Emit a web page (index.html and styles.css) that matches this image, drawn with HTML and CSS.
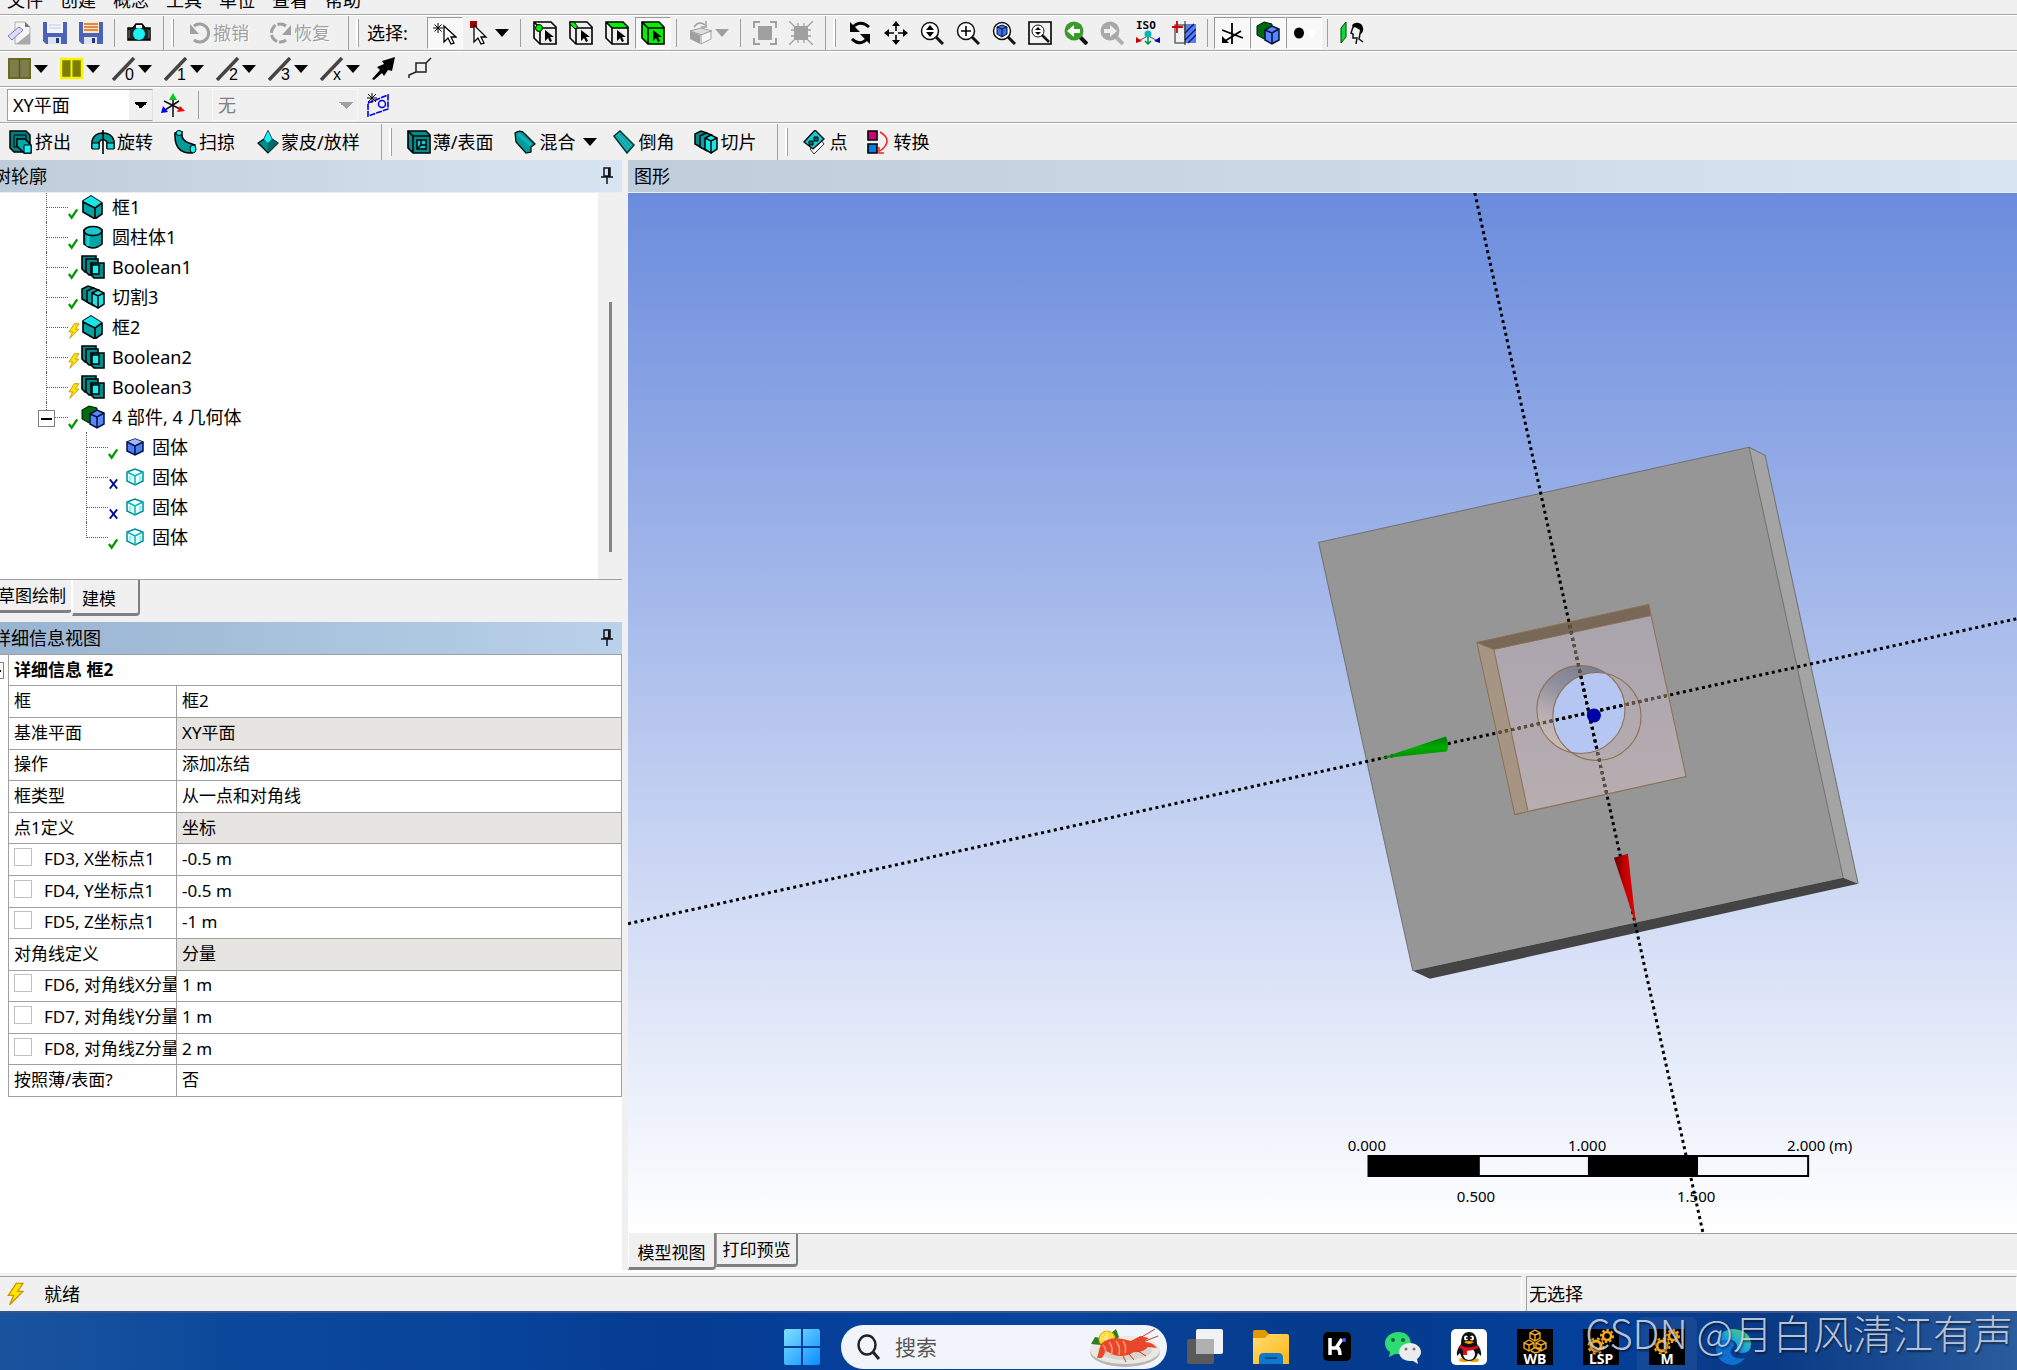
FILE: index.html
```html
<!DOCTYPE html>
<html lang="zh-CN">
<head>
    <meta charset="UTF-8">
    <meta name="viewport" content="width=device-width, initial-scale=1.0">
    <title>DesignModeler</title>
    <link rel="stylesheet" href="styles.css">
</head>
<body>
    <!-- Icon sprite -->
    <svg class="sprite" aria-hidden="true">
        <defs>
            <linearGradient id="gBlue" x1="0" y1="0" x2="1" y2="1"><stop offset="0" stop-color="#7fe0ff"/><stop offset="1" stop-color="#0a8dff"/></linearGradient>
            <linearGradient id="gFolder" x1="0" y1="0" x2="1" y2="1"><stop offset="0" stop-color="#ffdc70"/><stop offset="1" stop-color="#f9b818"/></linearGradient>
            <linearGradient id="gEdge" x1="0" y1="1" x2="1" y2="0"><stop offset="0" stop-color="#0a62c4"/><stop offset="0.5" stop-color="#1aa5dd"/><stop offset="1" stop-color="#5edb5a"/></linearGradient>
        </defs>
        <symbol id="i-new" viewBox="0 0 24 24"><path d="M8 1h10l5 5v17H8z" fill="#f4f4f4" stroke="#b0b0b0"/><path d="M18 1l5 5h-5z" fill="#777"/><path d="M9 23h14V12z" fill="#a9a9a9"/><path d="M1 15L12 6l4 3L5 19z" fill="#dcdcff" stroke="#7c7cc0"/></symbol>
        <symbol id="i-save" viewBox="0 0 24 24"><path d="M0 1h24v22H3l-3-3z" fill="#4a62b8"/><path d="M4 1h16v11H4z" fill="#f1f4fb"/><path d="M6 4h12M6 7h12" stroke="#c4cbe0"/><path d="M5 16h13v7H5z" fill="#dce2ef"/><path d="M13 17h3v5h-3z" fill="#24377e"/></symbol>
        <symbol id="i-saveas" viewBox="0 0 24 24"><path d="M0 1h24v22H3l-3-3z" fill="#4a62b8"/><path d="M4 1h16v11H4z" fill="#fbe9b8"/><path d="M5 3h14M5 6h14M5 9h14" stroke="#d8672f" stroke-width="1.5"/><path d="M5 16h13v7H5z" fill="#dce2ef"/><path d="M13 17h3v5h-3z" fill="#24377e"/></symbol>
        <symbol id="i-camera" viewBox="0 0 24 24"><path d="M1 7h5l3-4h6l3 4h5v12H1z" fill="#1c2626" stroke="#000" stroke-width="1.5"/><path d="M9 4h6v3H9z" fill="#efefef"/><path d="M2 9v8M22 9v8" stroke="#777"/><circle cx="12" cy="13" r="6" fill="#19f1f6"/></symbol>
        <symbol id="i-undo" viewBox="0 0 24 24"><path d="M6 5a9 9 0 1 1 0 14" fill="none" stroke="#a0a0a0" stroke-width="3"/><path d="M2 3v10h9z" fill="#a0a0a0"/></symbol>
        <symbol id="i-redo" viewBox="0 0 24 24"><path d="M17 5a9 9 0 1 0 0 14" fill="none" stroke="#a0a0a0" stroke-width="3" stroke-dasharray="9 2"/><path d="M22 4v10h-9z" fill="#a0a0a0"/></symbol>
        <symbol id="i-pick" viewBox="0 0 24 24"><path d="M5 2v10M0 7h10M1.500 3.500l7 7M8.500 3.500l-7 7" stroke="#000"/><path d="M11 5v16l4-4 3 6 3-1-3-6h5z" fill="#fff" stroke="#000" stroke-width="1.300"/></symbol>
        <symbol id="i-pickbox" viewBox="0 0 24 24"><path d="M1 0h7v7H1z" fill="#a00000"/><path d="M5 4v17l4-4 3 6 3-1-3-6h5z" fill="#fff" stroke="#000" stroke-width="1.300"/></symbol>
        <symbol id="i-cubeframe" viewBox="0 0 24 24"><path d="M1 1h17l5 5v17H7L1 17zM1 1l6 6h16M7 7v16" fill="none" stroke="#000" stroke-width="1.600"/><path d="M12 9v11l3-3 2 4 2-1-2-4h4z"/></symbol>
        <symbol id="i-selpoint" viewBox="0 0 24 24"><use href="#i-cubeframe"/><circle cx="6" cy="7" r="3.500" fill="#00f000" stroke="#000"/></symbol>
        <symbol id="i-seledge" viewBox="0 0 24 24"><use href="#i-cubeframe"/><path d="M1 1h4l4 5-3 2-5-5z" fill="#00f000" stroke="#000"/></symbol>
        <symbol id="i-selface" viewBox="0 0 24 24"><path d="M1 1h17l5 6H7z" fill="#00f000"/><use href="#i-cubeframe"/></symbol>
        <symbol id="i-selbody" viewBox="0 0 24 24"><path d="M1 1h17l5 5v17H7L1 17z" fill="#00f000"/><use href="#i-cubeframe"/></symbol>
        <symbol id="i-extend" viewBox="0 0 24 24"><path d="M1 10l11-3 11 3-10 4z" fill="#ddd" stroke="#a0a0a0"/><path d="M1 10l10 4v9L1 18z" fill="#a0a0a0"/><path d="M12 14l10-4v8l-10 5z" fill="#f5f5f5" stroke="#a0a0a0"/><path d="M5 6q5-7 11-2M17 0v6h-5" fill="none" stroke="#a0a0a0" stroke-width="1.500"/></symbol>
        <symbol id="i-grow" viewBox="0 0 24 24"><path d="M5 5h14v14H5z" fill="#a0a0a0"/><path d="M1 7V1h6M17 1h6v6M23 17v6h-6M7 23H1v-6" fill="none" stroke="#a0a0a0" stroke-width="2"/></symbol>
        <symbol id="i-shrink" viewBox="0 0 24 24"><path d="M5 5h14v14H5z" fill="#a0a0a0"/><path d="M0 0l24 24M24 0L0 24M9 2v20M15 2v20M2 9h20M2 15h20" stroke="#a0a0a0" stroke-width="1.300"/></symbol>
        <symbol id="i-rotate" viewBox="0 0 24 24"><path d="M4 7q8-9 17-1M20 17q-8 9-16 1" fill="none" stroke="#000" stroke-width="3"/><path d="M2 1v10h10zM22 23V13H12z"/></symbol>
        <symbol id="i-pan" viewBox="0 0 24 24"><path d="M12 4v6M12 14v6M4 12h6M14 12h6" stroke="#000" stroke-width="1.600"/><path d="M12 0l4 5H8zM12 24l4-5H8zM0 12l5-4v8zM24 12l-5-4v8z"/></symbol>
        <symbol id="i-lens" viewBox="0 0 24 24"><circle cx="10" cy="10" r="8.500" fill="#fff" stroke="#111" stroke-width="1.500"/><path d="M16 16l7 7" stroke="#111" stroke-width="3"/></symbol>
        <symbol id="i-zoom" viewBox="0 0 24 24"><use href="#i-lens"/><path d="M10 4l4 5H6zM10 16l4-5H6z"/></symbol>
        <symbol id="i-zoomin" viewBox="0 0 24 24"><use href="#i-lens"/><path d="M10 5v10M5 10h10" stroke="#000" stroke-width="1.600"/></symbol>
        <symbol id="i-zoomfit" viewBox="0 0 24 24"><use href="#i-lens"/><path d="M5 6l5-2 5 2v7l-5 3-5-3z" fill="#3d73e0" stroke="#001040"/><path d="M5 6l5 2 5-2M10 8v8" stroke="#001040" fill="none"/></symbol>
        <symbol id="i-zoomwin" viewBox="0 0 24 24"><path d="M1 1h22v22H1z" fill="#f3f3f3" stroke="#000" stroke-width="1.600"/><circle cx="10" cy="10" r="6" fill="#fff" stroke="#111"/><path d="M14 14l7 7" stroke="#111" stroke-width="2.500"/><path d="M10 6l3 3H7zM10 14l3-3H7z"/></symbol>
        <symbol id="i-prev" viewBox="0 0 24 24"><path d="M15 15l8 8" stroke="#111" stroke-width="4"/><circle cx="10" cy="10" r="9.500" fill="#3c9a2d"/><path d="M3 10l7-6v4h6v4h-6v4z" fill="#fff"/></symbol>
        <symbol id="i-next" viewBox="0 0 24 24"><path d="M15 15l8 8" stroke="#b0b0b0" stroke-width="4"/><circle cx="10" cy="10" r="9.500" fill="#a8a8a8"/><path d="M17 10l-7-6v4H4v4h6v4z" fill="#efefef"/></symbol>
        <symbol id="i-iso" viewBox="0 0 24 24"><text x="0" y="8" class="iso-text">ISO</text><circle cx="12" cy="13" r="3.500" fill="#00b8b8"/><path d="M12 16v7M9 20l3 3 3-3" stroke="#009050" stroke-width="1.500" fill="none"/><path d="M10 16l-6 3M14 16l6 3" stroke="#555"/><path d="M0 16v6l6-2z" fill="#c00"/><path d="M24 16v6l-6-2z" fill="#00c"/></symbol>
        <symbol id="i-section" viewBox="0 0 24 24"><path d="M3 4h10v18H3z" fill="none" stroke="#666" stroke-width="1.500"/><path d="M13 3h11v19H13z" fill="#5b7fe8"/><path d="M13 12l9-9M13 19L24 8M16 22l8-8" stroke="#001c90" stroke-width="1.500"/><path d="M5 0v12M0 6h11" stroke="#d00000" stroke-width="1.800"/><path d="M13 0v24" stroke="#222"/></symbol>
        <symbol id="i-axes" viewBox="0 0 24 24"><path d="M12 2v21M2 9l21 8M21 10L5 20" stroke="#000" stroke-width="1.800"/><path d="M2 15v7h7z"/></symbol>
        <symbol id="i-parts" viewBox="0 0 24 24"><path d="M1 5l7-4 8 2v11l-8 4-7-4z" fill="#006a10" stroke="#001800"/><path d="M9 9l7-4 7 3v11l-7 4-7-4z" fill="#5b86f5" stroke="#001040" stroke-width="1.500"/><path d="M9 9l7 3 7-4M16 12v11" fill="none" stroke="#001040" stroke-width="1.500"/></symbol>
        <symbol id="i-dot" viewBox="0 0 24 24"><ellipse cx="7" cy="12" rx="5" ry="5.500"/><path d="M20 7l5 5-5 5-4-5z" fill="#fff"/></symbol>
        <symbol id="i-look" viewBox="0 0 24 24"><path d="M1 7l5-6v15l-5 6z" fill="#00e030" stroke="#003800"/><path d="M12 4q4-4 9-1 4 4 1 9l-3 2 1-5-5-3-2 1z"/><path d="M13 6l-2 6 2 1v4h4l-1 6M20 13l-1 5 4 3" stroke="#111" fill="none" stroke-width="1.500"/></symbol>
        <symbol id="i-plates" viewBox="0 0 24 24"><path d="M1 2h21v19H1z" fill="#7c7c4c" stroke="#6b6b18" stroke-width="2"/><path d="M11.500 2v19" stroke="#5a5a10" stroke-width="1.500"/></symbol>
        <symbol id="i-platesy" viewBox="0 0 24 24"><path d="M1 2h21v19H1z" fill="#7d7d00" stroke="#f4f400" stroke-width="2.500"/><path d="M11.500 2v19" stroke="#f4f400" stroke-width="2"/></symbol>
        <symbol id="i-line" viewBox="0 0 24 24"><path d="M1 23L22 1" stroke="#454545" stroke-width="3.500"/></symbol>
        <symbol id="i-arrowne" viewBox="0 0 24 24"><path d="M23 0l-3 14-4-1-4 6-2-3-8 7-2-1 8-9-3-3 7-3-2-3z"/></symbol>
        <symbol id="i-probe" viewBox="0 0 24 24"><path d="M8 6h10v9H8zM18 6l5-5M8 15l-7 3v3" fill="none" stroke="#222" stroke-width="1.500"/></symbol>
        <symbol id="i-triad" viewBox="0 0 24 24"><path d="M12 5v19M3 8l16 8M18 8L4 17" stroke="#111" stroke-width="1.500"/><path d="M12 0l4 7H8z" fill="#00c820"/><path d="M24 18l-8 1 3-6z" fill="#f00"/><path d="M0 20l2-7 5 6z" fill="#00f"/></symbol>
        <symbol id="i-newplane" viewBox="0 0 24 24"><path d="M2 10l20-8v14L2 23z" fill="none" stroke="#0000e8" stroke-width="1.600" stroke-dasharray="6 1"/><circle cx="16" cy="11" r="3.500" fill="none" stroke="#0000e8" stroke-width="1.500"/><path d="M6 0v10M1 5h10M2 1l8 8M10 1l-8 8" stroke="#000"/></symbol>
        <symbol id="i-extrude" viewBox="0 0 24 24"><path d="M1 1h16l4 4v13l-4 4H5l-4-4z" fill="#008080" stroke="#000" stroke-width="1.500"/><path d="M5 5h12v12H5z" fill="none" stroke="#000"/><path d="M8 9h8l6 6v8h-7l-7-7z" fill="#00a8a8" stroke="#000" stroke-width="1.500"/><path d="M15 15h7v8h-7z" fill="#19f1f6" stroke="#000"/></symbol>
        <symbol id="i-revolve" viewBox="0 0 24 24"><path d="M1 18V11q2-8 11-8t11 8v7h-7v-6q-4-5-8 0v6z" fill="#009c9c" stroke="#000" stroke-width="1.500"/><path d="M1 13h7v6H1zM16 13h7v6h-7z" fill="#19d8dc" stroke="#000"/><path d="M12 0v24" stroke="#000" stroke-width="1.600"/></symbol>
        <symbol id="i-sweep" viewBox="0 0 24 24"><path d="M2 3l7-1q-1 9 7 11l6 2-3 8Q1 24 2 3z" fill="#009c9c" stroke="#000" stroke-width="1.500"/><ellipse cx="6" cy="3" rx="3" ry="2.500" fill="#19f1f6" stroke="#000"/><ellipse cx="20" cy="19" rx="3" ry="4" fill="#19f1f6" stroke="#000"/></symbol>
        <symbol id="i-skin" viewBox="0 0 24 24"><path d="M13 1l4 8 6 4-10 10L3 13l6-4z" fill="#008c8c" stroke="#000" stroke-width="1.200"/><path d="M13 1l4 8-4 4-4-4z" fill="#19f1f6"/><path d="M13 13v10l10-10-6-4z" fill="#006a6a"/></symbol>
        <symbol id="i-thin" viewBox="0 0 24 24"><path d="M1 1h18l4 4v18H6l-5-5z" fill="#008c8c" stroke="#000" stroke-width="1.600"/><path d="M6 6h17M6 6v17M1 1l5 5" stroke="#000" stroke-width="1.600"/><path d="M10 10h9v9h-9zM10 19l4-4h5M14 15v-5" fill="#19c8cc" stroke="#000" stroke-width="1.500"/></symbol>
        <symbol id="i-blend" viewBox="0 0 24 24"><path d="M2 3q6-4 10 1l10 10-4 3v5l-5 1L3 12z" fill="#009c9c" stroke="#000" stroke-width="1.200"/><path d="M5 4l13 11" stroke="#10b4b8" stroke-width="3"/></symbol>
        <symbol id="i-chamfer" viewBox="0 0 24 24"><path d="M2 6l6-5 14 14-7 8z" fill="#19b8b8" stroke="#033" stroke-width="1.500"/><path d="M5 6l12 14M8 4l11 13" stroke="#007c7c" stroke-dasharray="2 1"/></symbol>
        <symbol id="i-slice" viewBox="0 0 24 24"><path d="M1 4l6-3 6 2v13l-5 2-7-4z" fill="#008c8c" stroke="#000" stroke-width="1.500"/><path d="M6 6l6-3 6 2v13l-5 3-7-4z" fill="#00a4a4" stroke="#000" stroke-width="1.500"/><path d="M11 8l6-3 6 3v11l-6 4-6-4z" fill="#19e4e8" stroke="#000" stroke-width="1.500"/><path d="M11 8l6 3 6-3M17 11v12" fill="none" stroke="#000" stroke-width="1.500"/></symbol>
        <symbol id="i-point" viewBox="0 0 24 24"><path d="M9 17l8-8 4 5-10 10-4-5z" fill="#fff" stroke="#333"/><path d="M1 12L12 0l9 9-11 10z" fill="#19c8cc" stroke="#000" stroke-width="1.300"/><path d="M11 7h4v4h-4zM6 11h4v4H6z" fill="#066" stroke="#000"/></symbol>
        <symbol id="i-convert" viewBox="0 0 24 24"><path d="M1 1h9v9H1z" fill="#d0007c" stroke="#000" stroke-width="1.600"/><path d="M1 14h9v9H1z" fill="#0080e0" stroke="#000" stroke-width="1.600"/><path d="M13 2q7 4 7 9t-7 10M12 17v6h5" fill="none" stroke="#f02020" stroke-width="1.500"/></symbol>
        <symbol id="i-box" viewBox="0 0 24 24"><path d="M2 6l8-5 11 7v11l-7 5L2 17z" fill="#00a4a4" stroke="#000" stroke-width="1.600"/><path d="M2 6l8-5 11 7-7 5z" fill="#19e4e8"/><path d="M2 7l12 6 7-5M14 13v11" fill="none" stroke="#000" stroke-width="1.600"/></symbol>
        <symbol id="i-cyl" viewBox="0 0 24 24"><path d="M3 5v14q9 8 18 0V5z" fill="#00a4a4" stroke="#000" stroke-width="1.600"/><path d="M7 10v11" stroke="#19d4d8" stroke-width="3"/><ellipse cx="12" cy="6" rx="9" ry="4.500" fill="#19c8cc" stroke="#000" stroke-width="1.600"/></symbol>
        <symbol id="i-bool" viewBox="0 0 24 24"><path d="M1 1h14v16H4l-3-3z" fill="#008c8c" stroke="#000" stroke-width="1.600"/><path d="M5 4h12v16H8l-3-3z" fill="#008c8c" stroke="#000" stroke-width="1.600"/><path d="M10 8h13v15H13l-3-3z" fill="#008c8c" stroke="#000" stroke-width="1.600"/><path d="M11 10h7v9h-7z" fill="#19f1f6" stroke="#000" stroke-width="1.500"/></symbol>
        <symbol id="i-solid" viewBox="0 0 18 18"><path d="M1 4l8-3 8 3v9l-8 4-8-4z" fill="#4f7cf0" stroke="#001040" stroke-width="1.500"/><path d="M1 4l8-3 8 3-8 4z" fill="#9db8fa"/><path d="M1 4l8 4 8-4M9 8v9" fill="none" stroke="#001040" stroke-width="1.500"/></symbol>
        <symbol id="i-frozen" viewBox="0 0 18 18"><path d="M1 4l8-3 8 3v9l-8 4-8-4z" fill="#f2ffff" stroke="#008c94" stroke-width="1.500"/><path d="M1 4l8 4 8-4M9 8v9" fill="none" stroke="#00b4bc" stroke-width="1.500"/><path d="M4 8v5M14 8v5" stroke="#7ff" stroke-width="2"/></symbol>
        <symbol id="i-ok" viewBox="0 0 12 12"><path d="M1 6l3 4 6-9" fill="none" stroke="#009a00" stroke-width="2.500"/></symbol>
        <symbol id="i-no" viewBox="0 0 12 12"><path d="M2 1l8 10M10 1L2 11" stroke="#001090" stroke-width="2"/></symbol>
        <symbol id="i-bolt" viewBox="0 0 12 18"><path d="M7 1h5L8 7h4L2 17l3-7H1z" fill="#ffe600" stroke="#c89600"/></symbol>
        <symbol id="i-pin" viewBox="0 0 12 18"><path d="M3 1h6v8H3zM0 10h12M6 10v7" fill="none" stroke="#111" stroke-width="1.500"/><path d="M8 1v8" stroke="#111" stroke-width="2"/></symbol>
        <symbol id="t-win" viewBox="0 0 36 36"><path d="M2 0h15v17H0V2q0-2 2-2zM19 0h15q2 0 2 2v15H19zM0 19h17v17H2q-2 0-2-2zM19 19h17v15q0 2-2 2H19z" fill="url(#gBlue)"/></symbol>
        <symbol id="t-view" viewBox="0 0 36 36"><rect y="10" width="27" height="25" rx="2" fill="#5a5a5a"/><rect x="9" y="0" width="27" height="25" rx="2" fill="#f2f2f4"/><path d="M9 10h18v15H9z" fill="#b0b0b2"/></symbol>
        <symbol id="t-folder" viewBox="0 0 36 36"><path d="M0 3q0-2 2-2h10l4 4v6H0z" fill="#e09a00"/><path d="M0 9h12l4-4h18q2 0 2 2v28H0z" fill="url(#gFolder)"/><path d="M6 35v-6q0-5 5-5h14q5 0 5 5v6z" fill="#0f78cc"/><path d="M12 29h12" stroke="#0a4c8c" stroke-width="2"/></symbol>
        <symbol id="t-k" viewBox="0 0 36 36"><rect x="4" y="3" width="28" height="29" rx="5"/><path d="M11 9v17M12 19h5l6-9M17 18q4 1 4 8" fill="none" stroke="#fff" stroke-width="3.500"/><circle cx="25" cy="11" r="2" fill="#3d62ff"/></symbol>
        <symbol id="t-wechat" viewBox="0 0 36 36"><path d="M13 3C6 3 0 8 0 14q0 6 5 9l-1 5 6-3h5q0-8 11-10Q25 3 13 3z" fill="#2fdc72"/><circle cx="8" cy="11" r="2" fill="#0c6a34"/><circle cx="18" cy="11" r="2" fill="#0c6a34"/><path d="M25 14c-6 0-11 4-11 9s5 9 11 9h3l5 3-1-5q4-3 4-7c0-5-5-9-11-9z" fill="#ececee"/><circle cx="21" cy="20" r="1.500" fill="#777"/><circle cx="29" cy="20" r="1.500" fill="#777"/></symbol>
        <symbol id="t-qq" viewBox="0 0 36 36"><rect width="36" height="36" rx="5" fill="#fff"/><ellipse cx="13" cy="31" rx="5" ry="2" fill="#f5a300"/><ellipse cx="23" cy="31" rx="5" ry="2" fill="#f5a300"/><path d="M10 15q0-12 8-12t8 12q5 6 4 12l-3-3q-2 8-9 8t-9-8l-3 3q-1-6 4-12z" fill="#111"/><ellipse cx="18" cy="25" rx="6" ry="6" fill="#fff"/><ellipse cx="15" cy="9" rx="2" ry="2.500" fill="#fff"/><ellipse cx="21" cy="9" rx="2" ry="2.500" fill="#fff"/><circle cx="16" cy="9" r="1"/><circle cx="20" cy="9" r="1"/><path d="M13 13q5-2 10 0-5 4-10 0z" fill="#f5a300"/><path d="M9 16q9 5 18 0v3q-5 3-11 3v4h-4v-5l-3-2z" fill="#e60a1e"/></symbol>
        <symbol id="t-wb" viewBox="0 0 36 36"><path d="M0 0h36v36H0z"/><path d="M18 1l5 3v5l-5 3-5-3V4zM18 6l5-2M18 6l-5-2M18 6v6M12 11l5 3v5l-5 3-5-3v-5zM24 11l5 3v5l-5 3-5-3v-5zM12 16l5-2M12 16l-5-2M12 16v6M24 16l5-2M24 16l-5-2M24 16v6M17 19l6 0-1 4-4 1-4-2" fill="none" stroke="#f4a81c" stroke-width="1.400"/><text x="18" y="35" class="app-text">WB</text></symbol>
        <symbol id="t-gears" viewBox="0 0 36 36"><path d="M0 0h36v36H0z"/><circle cx="13" cy="17" r="5" fill="none" stroke="#f4a81c" stroke-width="3"/><circle cx="13" cy="17" r="7.500" fill="none" stroke="#f4a81c" stroke-width="2" stroke-dasharray="3 3"/><circle cx="24" cy="7" r="4" fill="none" stroke="#f4a81c" stroke-width="2.500"/><circle cx="24" cy="7" r="6" fill="none" stroke="#f4a81c" stroke-width="2" stroke-dasharray="2.500 2"/></symbol>
        <symbol id="t-edge" viewBox="0 0 36 36"><path d="M1 16Q4 0 19 0q17 2 17 15 0 9-9 9-6 0-5-4 1-9-8-9-8 0-13 5z" fill="url(#gEdge)"/><path d="M1 16q5-6 12-5 6 1 6 6-5 3-3 8 4 6 14 4-5 7-13 7Q0 34 1 16z" fill="#0e70cf"/></symbol>
        <symbol id="t-lobster" viewBox="0 0 72 40"><ellipse cx="36" cy="25" rx="35" ry="15" fill="#b9b7b4"/><ellipse cx="36" cy="23" rx="35" ry="14" fill="#ebe8e3"/><ellipse cx="36" cy="23" rx="27" ry="10" fill="#d8d4ce"/><path d="M2 17l4-7 6 1 4-7 5 3 6-5 3 8-8 9z" fill="#2f7d22"/><circle cx="18" cy="12" r="8" fill="#ffd83a" stroke="#e8b400"/><path d="M18 5v14M11 12h14M13 7l10 10" stroke="#fff3a8"/><path d="M8 31l4-14q8-8 22-5l8 2 9-5 9 2-6 4q9-1 14 6l-9-1q-5 6-14 5-9 6-20 3l-8-4-4 7z" fill="#e8472a"/><path d="M14 18q4 4 2 9M20 15q5 6 2 13M27 14q5 6 3 14M34 14q4 6 2 12" fill="none" stroke="#ff9a76" stroke-width="1.500"/><path d="M51 11l15-9M54 15l15-6M40 27l5 6M34 29l3 6M49 24l8 5" stroke="#c93a1f"/></symbol>
    </svg>

    <div class="app">
        <nav class="menubar">
            <button type="button">文件</button>
            <button type="button">创建</button>
            <button type="button">概念</button>
            <button type="button">工具</button>
            <button type="button">单位</button>
            <button type="button">查看</button>
            <button type="button">帮助</button>
        </nav>

        <!-- Toolbars -->
        <div class="toolbar">
            <div class="group">
                <button type="button" class="tool" aria-label="新建"><svg class="icon"><use href="#i-new"/></svg></button>
                <button type="button" class="tool" aria-label="保存"><svg class="icon"><use href="#i-save"/></svg></button>
                <button type="button" class="tool" aria-label="另存为"><svg class="icon"><use href="#i-saveas"/></svg></button>
                <span class="sep"></span>
                <button type="button" class="tool" aria-label="截图"><svg class="icon"><use href="#i-camera"/></svg></button>
            </div>
            <div class="group">
                <span class="grip"></span>
                <button type="button" class="tool history" disabled><svg class="icon"><use href="#i-undo"/></svg>撤销</button>
                <button type="button" class="tool history" disabled><svg class="icon"><use href="#i-redo"/></svg>恢复</button>
            </div>
            <div class="group">
                <span class="grip"></span>
                <span class="caption">选择:</span>
                <button type="button" class="tool pressed" aria-label="新选择"><svg class="icon"><use href="#i-pick"/></svg></button>
                <button type="button" class="tool drop" aria-label="选择模式"><svg class="icon"><use href="#i-pickbox"/></svg><span class="caret"></span></button>
                <span class="sep"></span>
                <button type="button" class="tool" aria-label="点"><svg class="icon"><use href="#i-selpoint"/></svg></button>
                <button type="button" class="tool" aria-label="边"><svg class="icon"><use href="#i-seledge"/></svg></button>
                <button type="button" class="tool" aria-label="面"><svg class="icon"><use href="#i-selface"/></svg></button>
                <button type="button" class="tool pressed" aria-label="体"><svg class="icon"><use href="#i-selbody"/></svg></button>
                <span class="sep"></span>
                <button type="button" class="tool drop" aria-label="扩展选择" disabled><svg class="icon"><use href="#i-extend"/></svg><span class="caret"></span></button>
                <span class="sep"></span>
                <button type="button" class="tool" aria-label="扩大" disabled><svg class="icon"><use href="#i-grow"/></svg></button>
                <button type="button" class="tool" aria-label="缩小" disabled><svg class="icon"><use href="#i-shrink"/></svg></button>
            </div>
            <div class="group open">
                <span class="grip"></span>
                <button type="button" class="tool" aria-label="旋转视图"><svg class="icon"><use href="#i-rotate"/></svg></button>
                <button type="button" class="tool" aria-label="平移"><svg class="icon"><use href="#i-pan"/></svg></button>
                <button type="button" class="tool" aria-label="缩放"><svg class="icon"><use href="#i-zoom"/></svg></button>
                <button type="button" class="tool" aria-label="框选放大"><svg class="icon"><use href="#i-zoomin"/></svg></button>
                <button type="button" class="tool" aria-label="适合窗口"><svg class="icon"><use href="#i-zoomfit"/></svg></button>
                <button type="button" class="tool" aria-label="放大镜"><svg class="icon"><use href="#i-zoomwin"/></svg></button>
                <button type="button" class="tool" aria-label="上一视图"><svg class="icon"><use href="#i-prev"/></svg></button>
                <button type="button" class="tool" aria-label="下一视图" disabled><svg class="icon"><use href="#i-next"/></svg></button>
                <button type="button" class="tool" aria-label="等轴测"><svg class="icon"><use href="#i-iso"/></svg></button>
                <button type="button" class="tool" aria-label="截面"><svg class="icon"><use href="#i-section"/></svg></button>
                <span class="sep"></span>
                <button type="button" class="tool pressed" aria-label="显示坐标轴"><svg class="icon"><use href="#i-axes"/></svg></button>
                <button type="button" class="tool pressed" aria-label="显示模型"><svg class="icon"><use href="#i-parts"/></svg></button>
                <button type="button" class="tool pressed" aria-label="显示点"><svg class="icon"><use href="#i-dot"/></svg></button>
                <span class="sep"></span>
                <button type="button" class="tool" aria-label="正视"><svg class="icon"><use href="#i-look"/></svg></button>
            </div>
        </div>

        <div class="toolbar edges">
            <button type="button" class="tool drop" aria-label="面颜色"><svg class="icon"><use href="#i-plates"/></svg><span class="caret"></span></button>
            <button type="button" class="tool drop" aria-label="边颜色"><svg class="icon"><use href="#i-platesy"/></svg><span class="caret"></span></button>
            <button type="button" class="tool drop"><svg class="icon" viewBox="0 0 24 24"><use href="#i-line"/><text x="13" y="23" class="line-text">0</text></svg><span class="caret"></span></button>
            <button type="button" class="tool drop"><svg class="icon" viewBox="0 0 24 24"><use href="#i-line"/><text x="13" y="23" class="line-text">1</text></svg><span class="caret"></span></button>
            <button type="button" class="tool drop"><svg class="icon" viewBox="0 0 24 24"><use href="#i-line"/><text x="13" y="23" class="line-text">2</text></svg><span class="caret"></span></button>
            <button type="button" class="tool drop"><svg class="icon" viewBox="0 0 24 24"><use href="#i-line"/><text x="13" y="23" class="line-text">3</text></svg><span class="caret"></span></button>
            <button type="button" class="tool drop"><svg class="icon" viewBox="0 0 24 24"><use href="#i-line"/><text x="13" y="23" class="line-text">x</text></svg><span class="caret"></span></button>
            <button type="button" class="tool" aria-label="边方向"><svg class="icon"><use href="#i-arrowne"/></svg></button>
            <button type="button" class="tool" aria-label="显示顶点"><svg class="icon"><use href="#i-probe"/></svg></button>
        </div>

        <div class="toolbar planes">
            <select class="combo" aria-label="平面">
                <option>XY平面</option>
            </select>
            <button type="button" class="tool" aria-label="新平面"><svg class="icon"><use href="#i-triad"/></svg></button>
            <span class="sep"></span>
            <select class="combo" aria-label="草图" disabled>
                <option>无</option>
            </select>
            <button type="button" class="tool" aria-label="新草图"><svg class="icon"><use href="#i-newplane"/></svg></button>
        </div>

        <div class="toolbar features">
            <div class="group">
                <button type="button" class="feature"><svg class="icon"><use href="#i-extrude"/></svg>挤出</button>
                <button type="button" class="feature"><svg class="icon"><use href="#i-revolve"/></svg>旋转</button>
                <button type="button" class="feature"><svg class="icon"><use href="#i-sweep"/></svg>扫掠</button>
                <button type="button" class="feature"><svg class="icon"><use href="#i-skin"/></svg>蒙皮/放样</button>
            </div>
            <div class="group">
                <span class="grip"></span>
                <button type="button" class="feature"><svg class="icon"><use href="#i-thin"/></svg>薄/表面</button>
                <button type="button" class="feature more"><svg class="icon"><use href="#i-blend"/></svg>混合<span class="caret"></span></button>
                <button type="button" class="feature"><svg class="icon"><use href="#i-chamfer"/></svg>倒角</button>
                <button type="button" class="feature"><svg class="icon"><use href="#i-slice"/></svg>切片</button>
            </div>
            <div class="group open">
                <span class="grip"></span>
                <button type="button" class="feature"><svg class="icon"><use href="#i-point"/></svg>点</button>
                <button type="button" class="feature"><svg class="icon"><use href="#i-convert"/></svg>转换</button>
            </div>
        </div>

        <main class="workspace">
            <aside class="sidebar">
                <h2 class="panel-title cut">树轮廓<svg class="pin"><use href="#i-pin"/></svg></h2>
                <div class="outline">
                    <ul class="tree">
                        <li><span class="branch"></span><svg class="state"><use href="#i-ok"/></svg><svg class="icon"><use href="#i-box"/></svg>框1</li>
                        <li><span class="branch"></span><svg class="state"><use href="#i-ok"/></svg><svg class="icon"><use href="#i-cyl"/></svg>圆柱体1</li>
                        <li><span class="branch"></span><svg class="state"><use href="#i-ok"/></svg><svg class="icon"><use href="#i-bool"/></svg>Boolean1</li>
                        <li><span class="branch"></span><svg class="state"><use href="#i-ok"/></svg><svg class="icon"><use href="#i-slice"/></svg>切割3</li>
                        <li><span class="branch"></span><svg class="state bolt"><use href="#i-bolt"/></svg><svg class="icon"><use href="#i-box"/></svg>框2</li>
                        <li><span class="branch"></span><svg class="state bolt"><use href="#i-bolt"/></svg><svg class="icon"><use href="#i-bool"/></svg>Boolean2</li>
                        <li><span class="branch"></span><svg class="state bolt"><use href="#i-bolt"/></svg><svg class="icon"><use href="#i-bool"/></svg>Boolean3</li>
                        <li class="last"><span class="branch"><button type="button" class="toggle" aria-label="折叠"></button></span><svg class="state"><use href="#i-ok"/></svg><svg class="icon"><use href="#i-parts"/></svg>4 部件, 4 几何体</li>
                    </ul>
                    <ul class="tree child">
                        <li><span class="branch"></span><svg class="state"><use href="#i-ok"/></svg><svg class="icon"><use href="#i-solid"/></svg>固体</li>
                        <li><span class="branch"></span><svg class="state"><use href="#i-no"/></svg><svg class="icon"><use href="#i-frozen"/></svg>固体</li>
                        <li><span class="branch"></span><svg class="state"><use href="#i-no"/></svg><svg class="icon"><use href="#i-frozen"/></svg>固体</li>
                        <li class="last"><span class="branch"></span><svg class="state"><use href="#i-ok"/></svg><svg class="icon"><use href="#i-frozen"/></svg>固体</li>
                    </ul>
                    <div class="scrollbar"><span class="thumb"></span></div>
                </div>
                <div class="tabs side-tabs">
                    <button type="button" class="tab sketch">草图绘制</button>
                    <button type="button" class="tab active">建模</button>
                </div>

                <h2 class="panel-title cut focus">详细信息视图<svg class="pin"><use href="#i-pin"/></svg></h2>
                <div class="details">
                    <button type="button" class="toggle" aria-label="折叠"></button>
                    <table>
                        <colgroup><col class="name"><col></colgroup>
                        <tr><th colspan="2" class="heading">详细信息 框2</th></tr>
                        <tr><th>框</th><td>框2</td></tr>
                        <tr><th>基准平面</th><td class="readonly">XY平面</td></tr>
                        <tr><th>操作</th><td>添加冻结</td></tr>
                        <tr><th>框类型</th><td>从一点和对角线</td></tr>
                        <tr><th>点1定义</th><td class="readonly">坐标</td></tr>
                        <tr><th><label><input type="checkbox">FD3, X坐标点1</label></th><td>-0.5 m</td></tr>
                        <tr><th><label><input type="checkbox">FD4, Y坐标点1</label></th><td>-0.5 m</td></tr>
                        <tr><th><label><input type="checkbox">FD5, Z坐标点1</label></th><td>-1 m</td></tr>
                        <tr><th>对角线定义</th><td class="readonly">分量</td></tr>
                        <tr><th><label><input type="checkbox">FD6, 对角线X分量</label></th><td>1 m</td></tr>
                        <tr><th><label><input type="checkbox">FD7, 对角线Y分量</label></th><td>1 m</td></tr>
                        <tr><th><label><input type="checkbox">FD8, 对角线Z分量</label></th><td>2 m</td></tr>
                        <tr><th>按照薄/表面?</th><td>否</td></tr>
                    </table>
                </div>
            </aside>

            <section class="graphics">
                <h2 class="panel-title">图形</h2>
                <div class="viewport">
                    <svg class="scene" viewBox="0 0 1389 1039" preserveAspectRatio="xMinYMin slice">
                        <defs>
                            <linearGradient id="face" x1="0" y1="0" x2="0" y2="1"><stop offset="0" stop-color="#aaa4ae"/><stop offset="1" stop-color="#b8aeb1"/></linearGradient>
                            <linearGradient id="wall" x1="0.6" y1="0" x2="0.2" y2="0.9"><stop offset="0" stop-color="#7c7e8e"/><stop offset="0.35" stop-color="#8e8f9e"/><stop offset="0.7" stop-color="#b9adb2"/><stop offset="1" stop-color="#c9bbba"/></linearGradient>
                            <linearGradient id="green" x1="0" y1="0" x2="0" y2="1"><stop offset="0" stop-color="#00780c"/><stop offset="0.5" stop-color="#00ac00"/><stop offset="1" stop-color="#008c00"/></linearGradient>
                            <linearGradient id="red" x1="0" y1="0" x2="1" y2="0"><stop offset="0" stop-color="#5c0000"/><stop offset="0.5" stop-color="#c80000"/><stop offset="1" stop-color="#e00000"/></linearGradient>
                            <clipPath id="pocket"><path d="M848 449L1020 411L1022 422L1057 583L886 621z"/></clipPath>
                            <clipPath id="right"><circle cx="968" cy="523" r="44"/></clipPath>
                            <clipPath id="hole" clip-path="url(#right)"><circle cx="952" cy="516" r="44"/></clipPath>
                            <path id="axes" d="M846 0L1074 1039M0 730L1389 425" fill="none" stroke-width="3" stroke-dasharray="3 3.500"/>
                        </defs>
                        <!-- plate -->
                        <path d="M690 349L1120 254L1214 684L784 777z" fill="#969696"/>
                        <path d="M1120 254L1136 262L1229 690L1214 684z" fill="#a4a4a4"/>
                        <path d="M784 777L1214 684L1229 690L801 785z" fill="#444"/>
                        <path d="M784 777L690 349L1120 254L1136 262L1229 690M1120 254L1214 684" fill="none" stroke="#707070"/>
                        <!-- pocket -->
                        <path d="M865 456L1022 422L1057 583L899 617z" fill="url(#face)"/>
                        <path d="M848 449L1020 411L1022 422L865 456z" fill="#786857"/>
                        <path d="M848 449L865 456L899 617L886 621z" fill="#a59582"/>
                        <path d="M848 449L1020 411L1022 422L1057 583L886 621zM848 449L865 456L1022 422M865 456L899 617" fill="none" stroke="#8c7050"/>
                        <!-- through hole -->
                        <circle cx="952" cy="516" r="44" fill="url(#wall)"/>
                        <circle cx="952" cy="516" r="44" fill="#b5c6f2" clip-path="url(#right)"/>
                        <circle cx="952" cy="516" r="44" fill="none" stroke="#8c7050"/>
                        <circle cx="968" cy="523" r="44" fill="none" stroke="#8c7050"/>
                        <!-- axes -->
                        <use href="#axes" stroke="#000"/>
                        <use href="#axes" stroke="#64523f" clip-path="url(#pocket)"/>
                        <use href="#axes" stroke="#000" clip-path="url(#hole)"/>
                        <path d="M751 565L817 543Q821 550 818 558z" fill="url(#green)"/>
                        <path d="M985 664L999 660L1007 731z" fill="url(#red)"/>
                        <circle cx="965" cy="522" r="7" fill="#0000a8"/>
                        <!-- scale -->
                        <path d="M740 962h439v20H740z" fill="none" stroke="#000" stroke-width="2"/>
                        <path d="M739 961h112v22H739zM959 961h110v22H959z"/>
                        <g class="scale-text">
                            <text x="719" y="957">0.000</text>
                            <text x="939" y="957">1.000</text>
                            <text x="1158" y="957">2.000 (m)</text>
                            <text x="828" y="1008">0.500</text>
                            <text x="1048" y="1008">1.500</text>
                        </g>
                    </svg>
                </div>
                <div class="tabs view-tabs">
                    <button type="button" class="tab active">模型视图</button>
                    <button type="button" class="tab">打印预览</button>
                </div>
            </section>
        </main>

        <footer class="statusbar">
            <div class="status"><svg class="ready"><use href="#i-bolt"/></svg>就绪</div>
            <div class="status selection">无选择</div>
        </footer>

        <div class="taskbar">
            <button type="button" class="task" aria-label="开始"><svg><use href="#t-win"/></svg></button>
            <label class="search">
                <svg class="glass" viewBox="0 0 24 26"><ellipse cx="10" cy="11" rx="8.500" ry="9.500" fill="none" stroke="#222" stroke-width="2.500"/><path d="M16 18l6 7" stroke="#222" stroke-width="3"/></svg>
                <input type="text" placeholder="搜索" aria-label="搜索">
                <svg class="lobster"><use href="#t-lobster"/></svg>
            </label>
            <button type="button" class="task" aria-label="任务视图"><svg><use href="#t-view"/></svg></button>
            <button type="button" class="task" aria-label="文件资源管理器"><svg><use href="#t-folder"/></svg></button>
            <button type="button" class="task" aria-label="K"><svg><use href="#t-k"/></svg></button>
            <button type="button" class="task" aria-label="微信"><svg><use href="#t-wechat"/></svg></button>
            <button type="button" class="task" aria-label="QQ"><svg><use href="#t-qq"/></svg></button>
            <button type="button" class="task" aria-label="Workbench"><svg><use href="#t-wb"/></svg></button>
            <button type="button" class="task"><svg viewBox="0 0 36 36"><use href="#t-gears"/><text x="18" y="35" class="app-text">LSP</text></svg></button>
            <button type="button" class="task current"><svg viewBox="0 0 36 36"><use href="#t-gears"/><text x="18" y="35" class="app-text">M</text></svg></button>
            <button type="button" class="task" aria-label="Edge"><svg><use href="#t-edge"/></svg></button>
            <span class="watermark">CSDN @月白风清江有声</span>
        </div>
    </div>
</body>
</html>
```
FILE: styles.css
```css
* {
    box-sizing: border-box;
}
body {
    margin: 0;
    font-family: "Noto Sans", "Noto Sans CJK SC", sans-serif;
    font-size: 18px;
    line-height: 24px;
    color: #000;
    background-color: #f0f0f0;
}
button, input, select {
    font: inherit;
    color: inherit;
}
button {
    padding: 0;
    border: none;
    background: none;
    white-space: nowrap;
}
h2, ul {
    margin: 0;
    padding: 0;
    font-size: 18px;
    font-weight: normal;
    list-style: none;
}
.sprite {
    position: absolute;
    width: 0;
    height: 0;
}
.app {
    display: flex;
    flex-direction: column;
    height: 100vh;
    overflow: hidden;
}
.icon {
    flex: none;
    width: 24px;
    height: 24px;
}

/* Menu, scrolled partly off the top */
.menubar {
    display: flex;
    flex: none;
    align-items: flex-end;
    gap: 17px;
    height: 15px;
    padding: 0 7px 2px;
    border-bottom: 1px solid #a8a8a8;
}

/* Toolbars */
.toolbar {
    display: flex;
    flex: none;
    align-items: stretch;
    gap: 2px;
    height: 36px;
    border-top: 1px solid #fff;
    border-bottom: 1px solid #a8a8a8;
}
.group {
    display: flex;
    align-items: center;
    padding-right: 6px;
    border-right: 1px solid #a0a0a0;
}
.group:first-child {
    padding-left: 1px;
}
.group.open {
    border-right: none;
}
.tool {
    display: flex;
    flex: none;
    align-items: center;
    justify-content: center;
    width: 36px;
    height: 32px;
}
.tool.pressed {
    background-color: #f8f8f8;
    border: 1px solid #fff;
    border-top-color: #999;
    border-left-color: #999;
}
.tool.drop {
    gap: 2px;
    width: 52px;
}
.tool.history {
    gap: 1px;
    width: 81px;
    padding-right: 4px;
}
.tool:disabled {
    color: #a0a0a0;
    text-shadow: 1px 1px 0 #fff;
}
.caret {
    border: 7px solid transparent;
    border-top: 8px solid #000;
    border-bottom: none;
}
.tool:disabled .caret {
    border-top-color: #a0a0a0;
}
.sep {
    flex: none;
    width: 12px;
    height: 28px;
    background: linear-gradient(#a0a0a0, #a0a0a0) 5px 0 / 1px 100% no-repeat;
}
.grip {
    flex: none;
    width: 14px;
    height: 28px;
    background: linear-gradient(#a0a0a0, #a0a0a0) 7px 0 / 1px 100% no-repeat,
        linear-gradient(#fff, #fff) 5px 0 / 2px 100% no-repeat;
}
.caption {
    width: 62px;
    padding-left: 2px;
}
.edges {
    gap: 0;
    align-items: center;
    padding-left: 2px;
}
.edges .tool {
    height: 30px;
}
.planes {
    align-items: center;
    gap: 4px;
    padding-left: 7px;
}
.planes .tool {
    width: 32px;
}
.planes .sep {
    margin-right: 3px;
}
.combo {
    appearance: none;
    width: 146px;
    height: 32px;
    padding: 0 5px;
    border: 1px solid #a0a0a0;
    border-right-color: #e0e0e0;
    border-radius: 0;
    color: #000;
    background: linear-gradient(to bottom right, #000 50%, transparent 50%) 133px 12px / 7px 7px no-repeat,
        linear-gradient(to bottom left, #000 50%, transparent 50%) 126px 12px / 7px 7px no-repeat,
        linear-gradient(#f0f0f0, #f0f0f0) 121px 0 / 24px 100% no-repeat,
        #fff;
}
.combo:disabled {
    border-color: #f8f8f8;
    color: #808080;
    opacity: 1;
    background: linear-gradient(to bottom right, #a0a0a0 50%, transparent 50%) 133px 12px / 7px 7px no-repeat,
        linear-gradient(to bottom left, #a0a0a0 50%, transparent 50%) 126px 12px / 7px 7px no-repeat,
        #f0f0f0;
}
.features {
    height: 37px;
    border-bottom: none;
}
.features .group {
    padding-left: 0;
    padding-right: 10px;
}
.feature {
    display: flex;
    align-items: center;
    gap: 2px;
    padding: 0 11px 0 9px;
}
.feature.more {
    padding-right: 6px;
}
.feature .caret {
    margin-left: 6px;
}

/* Panels */
.workspace {
    display: flex;
    flex: 1;
    gap: 6px;
    min-height: 0;
    border-bottom: 3px solid #fff;
}
.sidebar {
    display: flex;
    flex: none;
    flex-direction: column;
    width: 622px;
    overflow: hidden;
}
.panel-title {
    display: flex;
    flex: none;
    align-items: center;
    justify-content: space-between;
    height: 33px;
    padding: 0 9px 0 6px;
    background: linear-gradient(to right, #bfcddb, #d7e5f2);
    border-bottom: 1px solid #e8eef4;
}
.panel-title.cut {
    padding-left: 0;
    text-indent: -7px;
}
.panel-title.focus {
    background: linear-gradient(to right, #99b4d1, #b9d1ea);
    border-bottom-color: #a0a0a0;
}
.pin {
    width: 12px;
    height: 18px;
}
.outline {
    position: relative;
    flex: none;
    height: 387px;
    overflow: hidden;
    background-color: #fff;
    border-bottom: 1px solid #a0a0a0;
}
.tree {
    margin-top: -1px;
    padding-left: 46px;
}
.tree.child {
    margin-top: 0;
    padding-left: 86px;
}
.tree li {
    display: flex;
    align-items: center;
    height: 30px;
    white-space: nowrap;
}
.branch {
    position: relative;
    display: flex;
    align-items: center;
    width: 22px;
    height: 30px;
    border-left: 1px dotted #606060;
}
.branch::before {
    content: "";
    flex: 1;
    border-top: 1px dotted #606060;
}
.last .branch {
    align-items: flex-end;
    align-self: flex-start;
    height: 16px;
}
.state {
    align-self: flex-end;
    width: 11px;
    height: 12px;
    margin: 0 2px 2px 0;
}
.state.bolt {
    height: 18px;
}
.tree .icon {
    margin-right: 7px;
}
.tree.child .icon {
    width: 18px;
    height: 18px;
    margin: 0 8px 0 5px;
}
.toggle {
    position: absolute;
    width: 17px;
    height: 17px;
    border: 1px solid #808080;
    background: linear-gradient(#000, #000) center / 11px 2px no-repeat, #fff;
}
.branch .toggle {
    left: -9px;
    top: 8px;
}
.scrollbar {
    position: absolute;
    top: 0;
    right: 0;
    width: 24px;
    height: 100%;
    padding: 109px 0 27px 11px;
    background-color: #f0f0f0;
}
.thumb {
    display: block;
    width: 3px;
    height: 100%;
    background-color: #858585;
}

/* Tabs */
.tabs {
    display: flex;
    flex: none;
    align-items: flex-start;
    font-size: 17px;
}
.side-tabs {
    height: 42px;
}
.tab {
    height: 33px;
    padding: 2px 8px 0;
    background-color: #f0f0f0;
    border: 1px solid #a0a0a0;
    border-top: none;
    border-right: 2px solid #808080;
    border-bottom: 3px solid #808080;
    border-radius: 0 0 4px 0;
}
.tab.active {
    height: 37px;
    padding-top: 5px;
    border-left-color: #fff;
}
.side-tabs .sketch {
    width: 72px;
    padding-left: 0;
    padding-right: 0;
    border-left: none;
    border-right: 1px solid #fff;
    text-align: left;
    text-indent: -2px;
}
.side-tabs .active {
    width: 68px;
    margin-top: -1px;
    padding-left: 9px;
    text-align: left;
}
.view-tabs {
    height: 37px;
    border-top: 1px solid #a0a0a0;
}
.view-tabs .tab {
    width: 82px;
    padding-left: 0;
    padding-right: 0;
}
.view-tabs .active {
    width: 88px;
    margin-top: -1px;
}

/* Details */
.details {
    position: relative;
    flex: 1;
    min-height: 0;
    padding-left: 8px;
    overflow: hidden;
    background-color: #fff;
    font-size: 17px;
}
.details .toggle {
    left: -13px;
    top: 7px;
}
.details table {
    width: 100%;
    height: 442px;
    table-layout: fixed;
    border-collapse: collapse;
}
.details .name {
    width: 168px;
}
.details th, .details td {
    padding: 0 5px 1px;
    overflow: hidden;
    border: 1px solid #a0a0a0;
    font-weight: normal;
    text-align: left;
    white-space: nowrap;
}
.details tr:first-child th {
    border-top: none;
}
.details th {
    padding-right: 0;
}
.details .heading {
    font-weight: bold;
}
.details .readonly {
    background-color: #e7e5e1;
}
.details label {
    display: flex;
    align-items: center;
    gap: 12px;
}
.details input {
    appearance: none;
    flex: none;
    width: 18px;
    height: 18px;
    margin: 0 0 4px;
    border: 1px solid #c0c0c0;
    background-color: #fff;
}

/* Graphics view */
.graphics {
    display: flex;
    flex: 1;
    flex-direction: column;
    min-width: 0;
}
.viewport {
    flex: 1;
    min-height: 0;
    background: linear-gradient(#6b8cdd, #fff);
}
.scene {
    display: block;
    width: 100%;
    height: 100%;
}
.scale-text {
    font-size: 15px;
}

/* Small lettering in the icons */
.iso-text {
    font: bold 11px "DejaVu Sans Mono", monospace;
}
.line-text {
    font: 16px "Liberation Sans", sans-serif;
}
.app-text {
    font: bold 14px "Noto Sans", sans-serif;
    fill: #fff;
    text-anchor: middle;
}

/* Status bar */
.statusbar {
    display: flex;
    flex: none;
    gap: 4px;
    height: 38px;
    padding-top: 3px;
    background-color: #f0f0f0;
}
.status {
    display: flex;
    flex: 1;
    align-items: center;
    border-top: 1px solid #a0a0a0;
    border-right: 1px solid #fff;
}
.status.selection {
    flex: none;
    width: 491px;
    padding-left: 2px;
    border-left: 1px solid #a0a0a0;
}
.ready {
    width: 18px;
    height: 24px;
    margin: 0 20px 0 6px;
}

/* Taskbar */
.taskbar {
    position: relative;
    display: flex;
    flex: none;
    height: 59px;
    padding-left: 769px;
    border-top: 2px solid #35568c;
    background: linear-gradient(to right, #1a549f 0%, #0c489b 12%, #08439b 25%, #063c92 33%, #05409b 42%, #07459c 52%, #063a8c 66%, #04409b 78%, #0a3a84 88%, #2a5c9e 100%);
}
.task {
    display: flex;
    flex: none;
    align-items: center;
    justify-content: center;
    width: 66px;
    padding-top: 14px;
    padding-bottom: 4px;
}
.task svg {
    width: 36px;
    height: 36px;
}
.task.current {
    margin: 4px 3px 0;
    width: 60px;
    padding-top: 10px;
    border-radius: 6px 6px 0 0;
    background-color: rgba(255, 255, 255, 0.06);
}
.search {
    display: flex;
    flex: none;
    align-items: center;
    width: 326px;
    height: 44px;
    margin: 12px 5px 0 6px;
    padding: 0 6px 0 16px;
    border-radius: 22px;
    background-color: #f1f4fa;
}
.glass {
    flex: none;
    width: 24px;
    height: 26px;
}
.search input {
    flex: 1;
    min-width: 0;
    padding: 0 0 0 14px;
    border: none;
    background: none;
    font-size: 21px;
    line-height: 28px;
}
.search input::placeholder {
    color: #555;
    opacity: 1;
}
.lobster {
    flex: none;
    width: 72px;
    height: 40px;
}
.watermark {
    position: absolute;
    right: 4px;
    top: 0;
    font-family: "Noto Sans CJK SC", sans-serif;
    font-size: 40px;
    font-weight: 300;
    line-height: 38px;
    color: rgba(205, 214, 228, 0.9);
    text-shadow: 1px 2px 2px rgba(0, 0, 0, 0.5);
    white-space: nowrap;
}
```
